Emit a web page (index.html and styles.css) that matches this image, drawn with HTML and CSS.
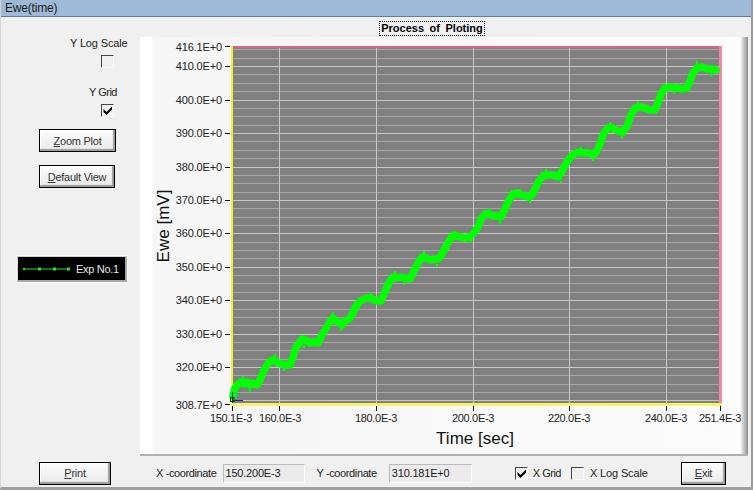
FILE: index.html
```html
<!DOCTYPE html>
<html lang="en">
<head>
<meta charset="utf-8">
<title>Ewe(time)</title>
<link rel="stylesheet" href="styles.css">
</head>
<body>
<div class="window">
  <header class="titlebar">Ewe(time)</header>
  <div class="caption-row"><span class="caption">Process of Ploting</span></div>
  <main class="main">
    <aside class="sidebar">
      <div class="opt opt-log">
        <span class="opt-label">Y Log Scale</span>
        <span class="check"></span>
      </div>
      <div class="opt opt-grid">
        <span class="opt-label label-ygrid">Y Grid</span>
        <span class="check"><svg class="tick" viewBox="0 0 11 11"><path d="M1.500 4l3 3L10 1.500v3L4.500 10 1.500 7z"/></svg></span>
      </div>
      <button class="btn btn-zoom"><u>Z</u>oom Plot</button>
      <button class="btn btn-default"><u>D</u>efault View</button>
      <div class="legend">
        <svg class="legend-line" viewBox="0 0 48 6">
          <path d="M0 3H47" stroke="#2fe02f" stroke-width="1"/>
          <path d="M0 2h2v2H0zM15 1.500h3v3h-3zM30 1.500h3v3h-3zM44 1.500h3v3h-3z" fill="#2fe02f"/>
        </svg>
        <span>Exp No.1</span>
      </div>
    </aside>
    <section class="panel">
      <svg class="chart" viewBox="140 37 608 417" width="608" height="417">
        <rect class="plot-bg" x="232" y="46" width="489" height="358"/>
        <path class="grid-minor" d="M232 49.500H721M232 58.500H721M232 74.500H721M232 83.500H721M232 91.500H721M232 108.500H721M232 116.500H721M232 125.500H721M232 141.500H721M232 150.500H721M232 158.500H721M232 175.500H721M232 183.500H721M232 192.500H721M232 208.500H721M232 217.500H721M232 225.500H721M232 242.500H721M232 250.500H721M232 258.500H721M232 275.500H721M232 283.500H721M232 292.500H721M232 309.500H721M232 317.500H721M232 325.500H721M232 342.500H721M232 350.500H721M232 359.500H721M232 375.500H721M232 384.500H721M232 392.500H721"/>
        <path class="grid-major" d="M232 66.500H721M232 100.500H721M232 133.500H721M232 167.500H721M232 200.500H721M232 233.500H721M232 267.500H721M232 300.500H721M232 334.500H721M232 367.500H721M232 400.500H721M279.500 46V404M376.500 46V404M473.500 46V404M569.500 46V404M666.500 46V404"/>
        <rect class="edge-top" x="232" y="46" width="489" height="2"/>
        <rect class="edge-right" x="719" y="46" width="3" height="360"/>
        <rect class="edge-left" x="231" y="46" width="2" height="360"/>
        <rect class="edge-bottom" x="231" y="403" width="491" height="3"/>
        <path class="trace" d="M233 396L235 388L238 384L241 382L244 384L247 382L250 385L253 383L257 385L260 380L263 372L267 365L270 361L274 360L278 363L282 364L286 365L290 365L293 357L296 347L300 342L303 339L307 341L310 343L314 342L318 343L321 337L325 330L329 323L333 318L336 320L339 323L342 325L345 321L349 319L352 315L355 308L358 303L362 300L366 298L370 298L374 300L378 301L381 301L384 294L387 287L390 281L393 277L397 278L400 277L405 278L410 279L414 271L418 263L422 257L426 258L430 260L434 259L438 259L441 256L445 248L449 241L453 235L457 236L461 237L465 238L469 237L473 234L477 229L481 219L485 214L489 214L493 216L497 216L501 217L505 209L509 200L513 194L517 193L521 195L525 196L529 197L532 195L536 187L539 181L543 176L548 175L553 175L558 177L561 173L565 165L569 159L574 154L579 152L584 153L589 153L594 155L598 149L601 141L604 133L608 128L613 128L618 131L623 132L627 126L631 115L635 108L640 107L645 108L650 110L655 110L658 103L661 94L665 88L671 87L677 88L682 89L687 88L690 81L693 73L697 68L702 67L707 69L712 69L716 70"/>
        <path class="trace-rough" d="M232.500 391V399M243 376V381M250 389V392M275 354V358M284 368V371M300 336V340M304 345V348M341 327V331M344 328V322M333 312V316M371 292V296M395 271V275M404 282V285M424 251V255M437 264V267M471 243V238M489 208V212M500 221V224M520 189V192M530 200V203M546 169V173M561 181V183M581 147V150M593 159V161M610 122V126M622 136V139M638 101V105M674 92V94M690 83V86M697 61V65M711 73V76"/>
        <path class="marker-axis" d="M232.500 392V403M232.500 400.500H243"/>
        <rect class="marker" x="230.500" y="397.500" width="3.500" height="4"/>
        <path class="tick-marks" d="M225 46.500H230M225 66.500H230M225 100.500H230M225 133.500H230M225 167.500H230M225 200.500H230M225 233.500H230M225 267.500H230M225 300.500H230M225 334.500H230M225 367.500H230M225 404.500H230M232.500 406V411M279.500 406V411M376.500 406V411M473.500 406V411M569.500 406V411M666.500 406V411M720.500 406V411"/>
        <g class="y-labels">
          <text x="222" y="51">416.1E+0</text>
          <text x="222" y="70">410.0E+0</text>
          <text x="222" y="104">400.0E+0</text>
          <text x="222" y="137">390.0E+0</text>
          <text x="222" y="171">380.0E+0</text>
          <text x="222" y="204">370.0E+0</text>
          <text x="222" y="237">360.0E+0</text>
          <text x="222" y="271">350.0E+0</text>
          <text x="222" y="304">340.0E+0</text>
          <text x="222" y="338">330.0E+0</text>
          <text x="222" y="371">320.0E+0</text>
          <text x="222" y="409">308.7E+0</text>
        </g>
        <g class="x-labels">
          <text x="231" y="422">150.1E-3</text>
          <text x="280" y="422">160.0E-3</text>
          <text x="376" y="422">180.0E-3</text>
          <text x="473" y="422">200.0E-3</text>
          <text x="569" y="422">220.0E-3</text>
          <text x="666" y="422">240.0E-3</text>
          <text x="720" y="422">251.4E-3</text>
        </g>
        <text class="axis-title" x="475" y="444">Time [sec]</text>
        <text class="axis-title" transform="translate(169 226) rotate(-90)">Ewe [mV]</text>
      </svg>
    </section>
  </main>
  <footer class="footer">
    <button class="btn btn-print"><u>P</u>rint</button>
    <span class="coord-label coord-x">X -coordinate</span>
    <span class="field field-x">150.200E-3</span>
    <span class="coord-label coord-y">Y -coordinate</span>
    <span class="field field-y">310.181E+0</span>
    <span class="check check-xgrid"><svg class="tick" viewBox="0 0 11 11"><path d="M1.500 4l3 3L10 1.500v3L4.500 10 1.500 7z"/></svg></span>
    <span class="foot-label label-xgrid">X Grid</span>
    <span class="check check-xlog"></span>
    <span class="foot-label">X Log Scale</span>
    <button class="btn btn-exit"><u>E</u>xit</button>
  </footer>
</div>
</body>
</html>
```

FILE: styles.css
```css
* { box-sizing: border-box; }
html, body { margin: 0; padding: 0; }
body {
  width: 753px;
  height: 490px;
  overflow: hidden;
  font-family: "Liberation Sans", Arial, sans-serif;
  font-size: 11px;
  color: #222;
  background: #f0f0f0;
}
.window {
  width: 753px;
  height: 490px;
  display: flex;
  flex-direction: column;
  background: #f0f0f0;
  border-right: 2px solid #9a9a9a;
  border-bottom: 3px solid #a0a0a0;
  border-left: 1px solid #d8d8d8;
}
.titlebar {
  height: 17px;
  flex: none;
  padding: 1px 0 0 4px;
  line-height: 14px;
  font-size: 12px;
  letter-spacing: -.2px;
  color: #1a1a1a;
  background: #9fbad9;
  border-bottom: 1px solid #5d7e9e;
}
.caption-row {
  height: 20px;
  flex: none;
  display: flex;
  justify-content: center;
  align-items: flex-end;
  padding: 0 0 1px 112px;
}
.caption {
  font-size: 11px;
  font-weight: bold;
  line-height: 13px;
  height: 15px;
  padding: 0 1px;
  white-space: nowrap;
  color: #000;
  border: 1px dotted #000;
  word-spacing: 2.500px;
}
.main {
  height: 419px;
  flex: none;
  display: flex;
}
.sidebar {
  width: 139px;
  flex: none;
  display: flex;
  flex-direction: column;
  align-items: flex-start;
}
.opt {
  display: flex;
  flex-direction: column;
  align-items: flex-start;
}
.opt-label { line-height: 13px; white-space: nowrap; letter-spacing: -.15px; }
.label-ygrid { letter-spacing: -.5px; }
.opt-log { margin: 0 0 0 69px; }
.opt-log .check { margin: 5px 0 0 31px; }
.opt-grid { margin: 18px 0 0 88px; }
.opt-grid .check { margin: 5px 0 0 12px; }
.check {
  display: block;
  flex: none;
  width: 13px;
  height: 13px;
  border-top: 1px solid #444;
  border-left: 1px solid #444;
  border-right: 1px solid #fbfbfb;
  border-bottom: 1px solid #fbfbfb;
  background: #f0f0f0;
}
.tick { display: block; width: 11px; height: 11px; fill: #000; }
.btn {
  display: block;
  height: 23px;
  padding: 0;
  font: 11px "Liberation Sans", Arial, sans-serif;
  letter-spacing: -.25px;
  color: #333;
  white-space: nowrap;
  background: linear-gradient(#fdfdfd, #e9e9e9);
  border: 1px solid #000;
  box-shadow: inset -2px -2px 1px #9c9c9c, inset 1px 1px 0 #fff;
}
.btn u { text-decoration-thickness: 1px; }
.btn-zoom { width: 77px; margin: 12px 0 0 38px; }
.btn-default { width: 76px; margin: 13px 0 0 38px; }
.legend {
  width: 110px;
  height: 26px;
  margin: 68px 0 0 16px;
  padding: 0 5px;
  display: flex;
  align-items: center;
  gap: 5px;
  font-size: 11px;
  background: #000;
  border: 1px solid #d0d0d0;
  border-right: 2px solid #a8a8a8;
  border-bottom: 2px solid #a8a8a8;
  outline: 1px solid #f9f9f9;
}
.legend span { color: #e8e8e8; white-space: nowrap; letter-spacing: -.3px; }
.legend-line { width: 48px; height: 6px; flex: none; }
.panel {
  width: 608px;
  height: 419px;
  flex: none;
  background: linear-gradient(90deg, #fff 0, #fff 12px, #f6f6f6 13px, #fbfbfb 580px, #fdfdfd 600px, #8e8e8e 608px);
  border-bottom: 2px solid #b0b0b0;
}
.chart { display: block; }
.plot-bg { fill: #808080; }
.grid-minor, .grid-major { fill: none; stroke-width: 1; shape-rendering: crispEdges; }
.grid-minor { stroke: #a6a6a6; }
.grid-major { stroke: #c8c8c8; }
.edge-top { fill: #e0608a; }
.edge-right { fill: #ee88ae; }
.edge-left { fill: #f0f040; }
.edge-bottom { fill: #f5f56a; }
.trace {
  fill: none;
  stroke: #00ff00;
  stroke-width: 7.500;
  stroke-linejoin: round;
  stroke-linecap: round;
}
.trace-rough { fill: none; stroke: #00ff00; stroke-width: 2; }
.marker-axis { fill: none; stroke: #1020d0; stroke-width: 1; shape-rendering: crispEdges; }
.marker { fill: none; stroke: #004000; stroke-width: 1; }
.tick-marks { fill: none; stroke: #111; stroke-width: 1; shape-rendering: crispEdges; }
.y-labels text, .x-labels text { font-size: 11px; fill: #222; }
.y-labels text { text-anchor: end; letter-spacing: -.15px; }
.x-labels text { text-anchor: middle; letter-spacing: -.3px; }
.axis-title {
  font-size: 17px;
  fill: #111;
  text-anchor: middle;
}
.footer {
  flex: 1;
  display: flex;
  align-items: center;
  padding: 3px 25px 0 0;
}
.btn-print { width: 72px; margin-left: 38px; flex: none; }
.btn-exit { width: 45px; margin-left: auto; flex: none; }
.coord-label { letter-spacing: -.38px; white-space: nowrap; }
.foot-label { letter-spacing: -.15px; white-space: nowrap; }
.coord-x { margin: 0 6px 0 45px; }
.coord-y { margin: 0 12px 0 12px; }
.field {
  height: 19px;
  flex: none;
  padding-left: 2px;
  line-height: 17px;
  letter-spacing: -.2px;
  background: #ebebeb;
  border: 1px solid #fff;
  border-top-color: #bbb;
  border-left-color: #bbb;
}
.field-x { width: 82px; }
.field-y { width: 83px; }
.check-xgrid { margin-left: 43px; }
.label-xgrid { margin: 0 10px 0 5px; letter-spacing: -.5px; }
.check-xlog { margin-right: 6px; }
```
